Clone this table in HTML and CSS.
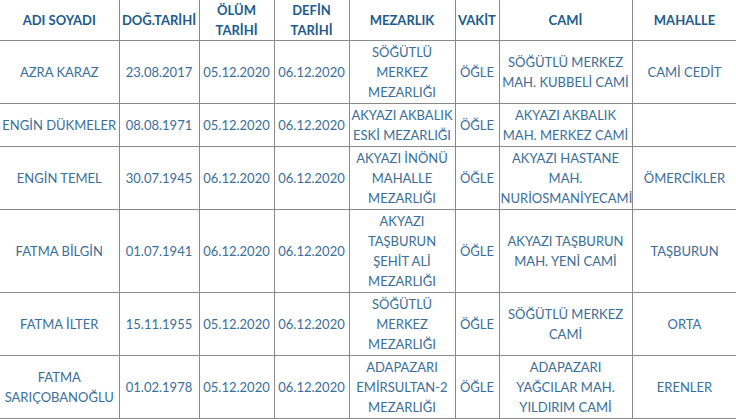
FILE: index.html
```html
<!DOCTYPE html>
<html lang="tr">
<head>
<meta charset="utf-8">
<title>Vefat Listesi</title>
<link rel="stylesheet" href="styles.css">
</head>
<body>
<table class="list">
  <colgroup>
    <col class="c-name"><col class="c-dog"><col class="c-olum"><col class="c-defin"><col class="c-mez"><col class="c-vakit"><col class="c-cami"><col class="c-mah">
  </colgroup>
  <thead>
    <tr>
      <th>ADI SOYADI</th>
      <th>DOĞ.TARİHİ</th>
      <th>ÖLÜM TARİHİ</th>
      <th>DEFİN TARİHİ</th>
      <th>MEZARLIK</th>
      <th>VAKİT</th>
      <th>CAMİ</th>
      <th>MAHALLE</th>
    </tr>
  </thead>
  <tbody>
    <tr>
      <td>AZRA KARAZ</td>
      <td>23.08.2017</td>
      <td>05.12.2020</td>
      <td>06.12.2020</td>
      <td>SÖĞÜTLÜ MERKEZ MEZARLIĞI</td>
      <td>ÖĞLE</td>
      <td>SÖĞÜTLÜ MERKEZ MAH. KUBBELİ CAMİ</td>
      <td>CAMİ CEDİT</td>
    </tr>
    <tr>
      <td>ENGİN DÜKMELER</td>
      <td>08.08.1971</td>
      <td>05.12.2020</td>
      <td>06.12.2020</td>
      <td>AKYAZI AKBALIK ESKİ MEZARLIĞI</td>
      <td>ÖĞLE</td>
      <td>AKYAZI AKBALIK MAH. MERKEZ CAMİ</td>
      <td></td>
    </tr>
    <tr>
      <td>ENGİN TEMEL</td>
      <td>30.07.1945</td>
      <td>06.12.2020</td>
      <td>06.12.2020</td>
      <td>AKYAZI İNÖNÜ MAHALLE MEZARLIĞI</td>
      <td>ÖĞLE</td>
      <td>AKYAZI HASTANE MAH. NURİOSMANİYECAMİ</td>
      <td>ÖMERCİKLER</td>
    </tr>
    <tr>
      <td>FATMA BİLGİN</td>
      <td>01.07.1941</td>
      <td>06.12.2020</td>
      <td>06.12.2020</td>
      <td>AKYAZI TAŞBURUN ŞEHİT ALİ MEZARLIĞI</td>
      <td>ÖĞLE</td>
      <td>AKYAZI TAŞBURUN MAH. YENİ CAMİ</td>
      <td>TAŞBURUN</td>
    </tr>
    <tr>
      <td>FATMA İLTER</td>
      <td>15.11.1955</td>
      <td>05.12.2020</td>
      <td>06.12.2020</td>
      <td>SÖĞÜTLÜ MERKEZ MEZARLIĞI</td>
      <td>ÖĞLE</td>
      <td>SÖĞÜTLÜ MERKEZ CAMİ</td>
      <td>ORTA</td>
    </tr>
    <tr>
      <td>FATMA SARIÇOBANOĞLU</td>
      <td>01.02.1978</td>
      <td>05.12.2020</td>
      <td>06.12.2020</td>
      <td>ADAPAZARI EMİRSULTAN-2 MEZARLIĞI</td>
      <td>ÖĞLE</td>
      <td>ADAPAZARI YAĞCILAR MAH. YILDIRIM CAMİ</td>
      <td>ERENLER</td>
    </tr>
  </tbody>
</table>
</body>
</html>
```
FILE: styles.css
```css
html, body {
  margin: 0;
  padding: 0;
  background: #ffffff;
}

body {
  font-family: Lato, "Open Sans", "DejaVu Sans", sans-serif;
  overflow: hidden;
}

.list {
  border-collapse: collapse;
  table-layout: fixed;
  width: 737px;
}

.c-name { width: 119px; }
.c-dog { width: 80px; }
.c-olum { width: 75px; }
.c-defin { width: 75px; }
.c-mez { width: 106px; }
.c-vakit { width: 44px; }
.c-cami { width: 133px; }
.c-mah { width: 105px; }

.list th,
.list td {
  border: 1px solid #8a8a8a;
  text-align: center;
  vertical-align: middle;
  font-size: 13px;
  line-height: 20px;
  padding: 1px 1px;
}

.list tr > :first-child {
  border-left: none;
}

.list thead th {
  border-top: none;
  font-weight: 700;
  color: #215b8c;
  padding: 0 1px;
  height: 40px;
}

.list td {
  color: #3b6e98;
  font-weight: 400;
}
```
